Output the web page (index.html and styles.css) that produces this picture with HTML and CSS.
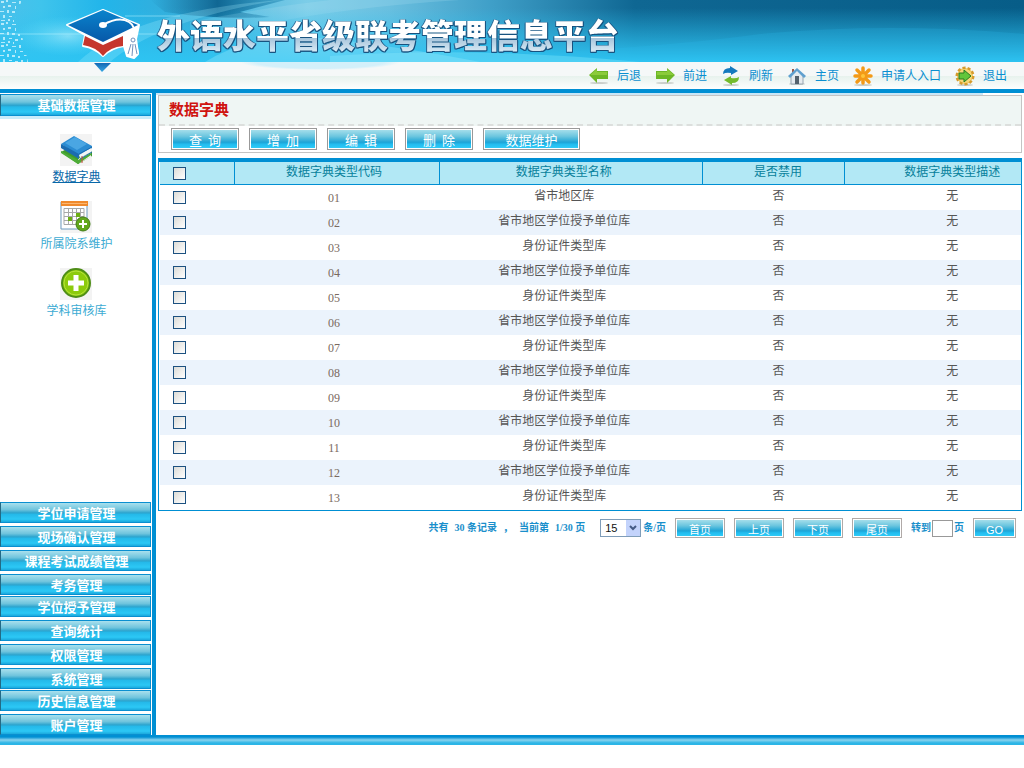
FILE: index.html
```html
<!DOCTYPE html>
<html lang="zh-CN">
<head>
<meta charset="utf-8">
<title>外语水平省级联考管理信息平台</title>
<link rel="stylesheet" href="styles.css">
</head>
<body>
<header class="header">
  <div class="banner">
    <svg class="banner-art" viewBox="0 0 1024 62" preserveAspectRatio="none" aria-hidden="true">
      <defs>
        <linearGradient id="base" x1="0" x2="1" y1="0" y2="0">
          <stop offset="0" stop-color="#4cc0ea"/><stop offset=".04" stop-color="#3fc4ec"/><stop offset=".1" stop-color="#22b5ea"/>
          <stop offset=".19" stop-color="#3aabd6"/><stop offset=".3" stop-color="#7ccde8"/><stop offset=".38" stop-color="#6abfdf"/>
          <stop offset=".48" stop-color="#3f9fc8"/><stop offset=".62" stop-color="#0f6793"/><stop offset="1" stop-color="#075d88"/>
        </linearGradient>
        <linearGradient id="low" x1="0" x2="0" y1="0" y2="1">
          <stop offset="0" stop-color="#2ec4f2" stop-opacity="0"/><stop offset="1" stop-color="#2ec4f2"/>
        </linearGradient>
        <linearGradient id="shade" x1="0" x2="1" y1="0" y2="0">
          <stop offset="0" stop-color="#0b6796" stop-opacity="0"/><stop offset=".5" stop-color="#0a5f8c" stop-opacity=".9"/><stop offset="1" stop-color="#1580ae" stop-opacity=".4"/>
        </linearGradient>
        <radialGradient id="glow"><stop offset="0" stop-color="#d8fbff" stop-opacity=".95"/><stop offset="1" stop-color="#6be3ff" stop-opacity="0"/></radialGradient>
        <pattern id="bits" width="24" height="22" patternUnits="userSpaceOnUse">
          <path fill="#c9f1fc" d="M1 1h3v2H1zM6 0h2v2H6zM12 2h4v1h-4zM19 1h2v3h-2zM3 6h2v2H3zM8 5h3v2H8zM15 6h1v3h-1zM20 7h3v1h-3zM0 11h4v1H0zM7 10h2v3H7zM12 11h3v2h-3zM18 12h2v2h-2zM3 15h2v3H3zM9 16h3v1H9zM15 17h3v2h-3zM21 16h2v2h-2zM1 20h4v1H1zM8 19h2v2H8zM13 20h1v2h-1z"/>
        </pattern>
      </defs>
      <rect width="1024" height="62" fill="url(#base)"/>
      <path d="M150 0H285L240 12L270 17Q215 20 165 12Z" fill="url(#shade)"/>
      <path d="M190 22Q260 8 330 0H460Q300 10 190 42Z" fill="#b7e8f6" opacity=".2"/>
      <rect y="8" width="1024" height="54" fill="url(#low)"/>
      <path d="M310 44Q430 60 560 52T760 34Q890 22 1024 34V62H310Z" fill="#2cc0f0" opacity=".2"/>
      <path d="M330 56Q470 46 640 62H330Z" fill="#7be3fa" opacity=".4"/>
      <path d="M78 62Q130 12 280 0Q160 20 110 62Z" fill="#a8f1ff" opacity=".25"/>
      <path d="M205 62Q255 30 340 40Q420 50 480 62Z" fill="#9ce9fb" opacity=".35"/>
      <ellipse cx="68" cy="36" rx="55" ry="20" fill="url(#glow)" opacity=".5"/>
      <path d="M0 34H160M125 16H180" stroke="#b9f4ff" stroke-width="1" opacity=".5"/>
      <path d="M0 0H22L14 20L22 36L28 62H0Z" fill="url(#bits)" opacity=".85"/>
    </svg>
    <svg class="logo" viewBox="0 0 76 66" role="img" aria-label="学位帽标志">
      <defs>
        <linearGradient id="cap" x1="0" x2="0" y1="0" y2="1"><stop offset="0" stop-color="#0a83cc"/><stop offset="1" stop-color="#0758a8"/></linearGradient>
        <linearGradient id="tip" x1="0" x2="0" y1="0" y2="1"><stop offset="0" stop-color="#1368b4"/><stop offset="1" stop-color="#36a7e3"/></linearGradient>
      </defs>
      <path d="M38 2L2 17L20 27L18 38Q30 40 38 48Q46 40 59 38L62 48L69 50L73 46L71 31L74 17Z" fill="#fff" stroke="#fff" stroke-width="2" stroke-linejoin="round"/>
      <path d="M20 28L38 37L58 28V38Q45 39 38 48Q31 39 18 37Z" fill="#c6362c"/>
      <path d="M38 2L3 17L38 34L73 17Z" fill="url(#cap)"/>
      <path d="M38 17Q54 8 64 14Q71 18 70 31" fill="none" stroke="#fff" stroke-width="2"/>
      <ellipse cx="38" cy="17" rx="4" ry="3" fill="#fff"/>
      <path d="M69 31Q60 39 63 47L69 50L74 45L71 31" fill="#fff"/>
      <circle cx="68" cy="32" r="2" fill="#fff" stroke="#7191bc"/>
      <path d="M66 36L63 46M68 36L67 48M70 36L72 46" stroke="#7191bc" stroke-width="1"/>
      <path d="M29 55H46L37 64Z" fill="url(#tip)"/>
    </svg>
    <h1 class="site-title">外语水平省级联考管理信息平台</h1>
  </div>
  <nav class="topnav">
    <a href="#"><svg viewBox="0 0 20 20"><ellipse cx="10" cy="17" rx="9" ry="1" fill="#c9ceca"/><path d="M0 9L8 2V5H19V13H8V17Z" fill="#6cb726"/><path d="M1 9L8 3V6H18V9Z" fill="#8bcb3b"/></svg>后退</a>
    <a href="#"><svg viewBox="0 0 20 20"><ellipse cx="10" cy="17" rx="9" ry="1" fill="#c9ceca"/><path d="M20 9L12 2V5H1V13H12V17Z" fill="#6cb726"/><path d="M19 9L12 3V6H2V9Z" fill="#8bcb3b"/></svg>前进</a>
    <a href="#"><svg viewBox="0 0 20 20"><ellipse cx="10" cy="19" rx="8" ry="1" fill="#c9ceca"/><path d="M2 8Q2 2 9 2V0L17 5L10 9V7Q5 6 2 8Z" fill="#1479bd"/><path d="M18 11Q18 17 11 17V19L3 14L10 10V12Q15 13 18 11Z" fill="#73bb2c"/></svg>刷新</a>
    <a href="#"><svg viewBox="0 0 20 20"><ellipse cx="10" cy="18" rx="8" ry="1" fill="#c9ceca"/><path d="M4 9L10 4L16 9V18H4Z" fill="#e5ebef" stroke="#96a5b0"/><path d="M5 3H7V8H5Z" fill="#9a5a4a"/><path d="M1 10L10 2L19 10L17 12L10 5L3 12Z" fill="#5fa0cf"/><path d="M8 10h4v8H8z" fill="#54626d"/></svg>主页</a>
    <a href="#"><svg viewBox="0 0 20 20"><ellipse cx="10" cy="19" rx="9" ry="1" fill="#c9ceca"/><g stroke="#f39a18" stroke-width="3.5" stroke-linecap="round"><path d="M10 2V17M2 10H18M4 4L16 16M16 4L4 16"/></g><circle cx="10" cy="10" r="2" fill="#ffc43a"/></svg>申请人入口</a>
    <a href="#"><svg viewBox="0 0 20 20"><ellipse cx="10" cy="19" rx="8" ry="1" fill="#c9ceca"/><circle cx="10" cy="10" r="8" fill="#f1c95c" stroke="#d69b2c" stroke-width="3" stroke-dasharray="3 2"/><circle cx="10" cy="10" r="7" fill="#f6d878"/><path d="M4 7H9V4L16 10L9 16V13H4Z" fill="#62c63b" stroke="#287a20"/></svg>退出</a>
  </nav>
</header>

<div class="workspace">
  <aside class="sidebar">
    <button class="side-tab" type="button">基础数据管理</button>
    <nav class="side-menu">
      <a class="side-link current" href="#">
        <svg viewBox="0 0 32 32"><path fill="#f3f3f3" d="M0 0h32v32H0z"/><path d="M1 18L18 30L32 22V18L16 10Z" fill="#3f9a2f"/><path d="M18 25L31 18V23L19 29Z" fill="#f3f3ee"/><path d="M1 17L18 26L31 19V21L18 30L1 19Z" fill="#4dac36"/><path d="M1 10L14 2L32 12V14L19 22Z" fill="#2b8cd2"/><path d="M19 21L31 14V18L20 24Z" fill="#f2f5f7"/><path d="M1 10L19 20V25L1 14Z" fill="#1b6cb0"/><path d="M5 9L15 3L27 10L17 16Z" fill="#4aa6e3"/><path d="M19 20L32 13M20 25L32 18" stroke="#1b6cb0"/><path d="M22 22V29" stroke="#c9493c"/></svg>
        数据字典</a>
      <a class="side-link" href="#">
        <svg viewBox="0 0 32 32"><path fill="#f3f3f3" d="M0 0h32v32H0z"/><path d="M1 1H27V28H1Z" fill="#fff" stroke="#6f9cc0"/><path d="M1 0H28V5H1Z" fill="#f08a2c"/><path d="M2 2H27V3H2Z" fill="#fbb771"/><path d="M4 7.500H24V23.500H4ZM8.500 8V24M12.500 8V24M16.500 8V24M20.500 8V24M4 11.500H24M4 15.500H24M4 19.500H24" fill="none" stroke="#a7a9a9"/><path d="M8 16h4v4H8zM16 12h4v4h-4z" fill="#6daf14"/><circle cx="23" cy="23" r="7" fill="#61a71c" stroke="#437d17"/><path d="M23 19V27M19 23H27" stroke="#fff" stroke-width="2"/></svg>
        所属院系维护</a>
      <a class="side-link" href="#">
        <svg viewBox="0 0 32 32"><path fill="#f3f3f3" d="M0 0h32v32H0z"/><circle cx="16" cy="15" r="14" fill="#8ccb0c" stroke="#4e8d17" stroke-width="2"/><circle cx="16" cy="15" r="12" fill="none" stroke="#b5e13d"/><path d="M16 7V23M8 15H24" stroke="#fff" stroke-width="5"/></svg>
        学科审核库</a>
    </nav>
    <div class="side-tabs">
      <button class="side-tab" type="button">学位申请管理</button>
      <button class="side-tab" type="button">现场确认管理</button>
      <button class="side-tab" type="button">课程考试成绩管理</button>
      <button class="side-tab tight" type="button">考务管理</button>
      <button class="side-tab" type="button">学位授予管理</button>
      <button class="side-tab" type="button">查询统计</button>
      <button class="side-tab" type="button">权限管理</button>
      <button class="side-tab tight" type="button">系统管理</button>
      <button class="side-tab" type="button">历史信息管理</button>
      <button class="side-tab" type="button">账户管理</button>
    </div>
  </aside>

  <main class="main">
    <section class="panel">
      <h2 class="panel-title">数据字典</h2>
      <div class="toolbar">
        <button class="btn" type="button">查&nbsp; 询</button>
        <button class="btn" type="button">增&nbsp; 加</button>
        <button class="btn" type="button">编&nbsp; 辑</button>
        <button class="btn" type="button">删&nbsp; 除</button>
        <button class="btn wide" type="button">数据维护</button>
      </div>
    </section>

    <div class="grid">
      <table>
        <colgroup><col class="c-check"><col class="c-code"><col class="c-name"><col class="c-off"><col></colgroup>
        <thead>
          <tr><th><input type="checkbox" aria-label="全选"></th><th>数据字典类型代码</th><th>数据字典类型名称</th><th>是否禁用</th><th>数据字典类型描述</th></tr>
        </thead>
        <tbody>
          <tr><td><input type="checkbox" aria-label="选择 01"></td><td>01</td><td>省市地区库</td><td>否</td><td>无</td></tr>
          <tr><td><input type="checkbox" aria-label="选择 02"></td><td>02</td><td>省市地区学位授予单位库</td><td>否</td><td>无</td></tr>
          <tr><td><input type="checkbox" aria-label="选择 03"></td><td>03</td><td>身份证件类型库</td><td>否</td><td>无</td></tr>
          <tr><td><input type="checkbox" aria-label="选择 04"></td><td>04</td><td>省市地区学位授予单位库</td><td>否</td><td>无</td></tr>
          <tr><td><input type="checkbox" aria-label="选择 05"></td><td>05</td><td>身份证件类型库</td><td>否</td><td>无</td></tr>
          <tr><td><input type="checkbox" aria-label="选择 06"></td><td>06</td><td>省市地区学位授予单位库</td><td>否</td><td>无</td></tr>
          <tr><td><input type="checkbox" aria-label="选择 07"></td><td>07</td><td>身份证件类型库</td><td>否</td><td>无</td></tr>
          <tr><td><input type="checkbox" aria-label="选择 08"></td><td>08</td><td>省市地区学位授予单位库</td><td>否</td><td>无</td></tr>
          <tr><td><input type="checkbox" aria-label="选择 09"></td><td>09</td><td>身份证件类型库</td><td>否</td><td>无</td></tr>
          <tr><td><input type="checkbox" aria-label="选择 10"></td><td>10</td><td>省市地区学位授予单位库</td><td>否</td><td>无</td></tr>
          <tr><td><input type="checkbox" aria-label="选择 11"></td><td>11</td><td>身份证件类型库</td><td>否</td><td>无</td></tr>
          <tr><td><input type="checkbox" aria-label="选择 12"></td><td>12</td><td>省市地区学位授予单位库</td><td>否</td><td>无</td></tr>
          <tr><td><input type="checkbox" aria-label="选择 13"></td><td>13</td><td>身份证件类型库</td><td>否</td><td>无</td></tr>
        </tbody>
      </table>
    </div>

    <div class="pager">
      <div class="summary"><span>共有</span><span>30 条记录</span><span>，</span><span>当前第</span><span>1/30 页</span></div>
      <label class="size"><select><option>15</option><option>30</option></select><span>条/页</span></label>
      <button class="btn small" type="button">首页</button>
      <button class="btn small" type="button">上页</button>
      <button class="btn small" type="button">下页</button>
      <button class="btn small" type="button">尾页</button>
      <label class="jump">转到<input type="text"><span>页</span></label>
      <button class="btn small go" type="button">GO</button>
    </div>
  </main>
</div>
<footer class="footer"></footer>
</body>
</html>
```
FILE: styles.css
```css
* { box-sizing: border-box; }

body {
  display: flex;
  flex-direction: column;
  min-height: 100vh;
  margin: 0;
  padding-bottom: 23px;
  background: #fff;
  color: #555;
  font: 12px/16px "Liberation Serif", "Noto Sans CJK SC", sans-serif;
}

a { color: inherit; text-decoration: none; }
button, input, select { margin: 0; font: inherit; }
button { cursor: pointer; }

/* Header */
.header { border-bottom: 4px solid #008fd3; }

.banner {
  position: relative;
  display: flex;
  height: 62px;
  padding-left: 65px;
  gap: 16px;
}

.banner-art {
  position: absolute;
  inset: 0;
  width: 100%;
  height: 100%;
}

.logo {
  position: relative;
  z-index: 1;
  flex: none;
  width: 76px;
  height: 66px;
  margin-top: 8px;
}

.site-title {
  position: relative;
  margin: 13px 0 0;
  font: 900 33px/42px "Noto Sans CJK SC", sans-serif;
  white-space: nowrap;
  color: transparent;
  background: linear-gradient(#fff 50%, #a9c6dc 52%, #e2f1fa 85%);
  background-clip: text;
  -webkit-background-clip: text;
  filter: drop-shadow(1px 0 0 #17527f) drop-shadow(-1px 0 0 #2f6d98) drop-shadow(0 1px 0 #17527f);
}

.topnav {
  display: flex;
  flex-wrap: wrap;
  justify-content: flex-end;
  align-items: center;
  gap: 0 14px;
  min-height: 27px;
  padding-right: 17px;
  background:
    radial-gradient(closest-side, #d3f0fa 80%, transparent) 240px -8px / 160px 16px no-repeat,
    linear-gradient(#f5f8f8 50%, #e7f2ed 52%, #fdfefe);
  color: #0a8fd0;
}

.topnav a { display: flex; align-items: center; gap: 8px; }
.topnav svg { width: 20px; height: 20px; }

/* Sidebar */
.workspace { display: flex; flex: 1; }

.sidebar {
  display: flex;
  flex-direction: column;
  flex: none;
  width: 156px;
  padding: 1px 1px 0 0;
  border-right: 4px solid #008fd3;
}

.side-tab {
  flex: none;
  width: 151px;
  height: 21px;
  padding: 0 0 0 2px;
  border: 1px solid #0a8fd0;
  border-left-color: #236a85;
  background: linear-gradient(#a9e0ed, #6fc4dd 35%, #2ba4ce 52%, #25b9e9 60%, #2cc8f5 85%, #1ba8dc);
  color: #fff;
  font: bold 13px/18px "Noto Sans CJK SC", sans-serif;
}

.sidebar > .side-tab { height: 22px; box-shadow: 0 3px #c9ecfa; }

.side-menu {
  display: flex;
  flex-direction: column;
  align-items: center;
  gap: 16px;
  padding: 18px 0 18px 2px;
}

.side-link {
  display: flex;
  flex-direction: column;
  align-items: center;
  gap: 3px;
  color: #3cabd3;
}

.side-link svg { width: 32px; height: 32px; }
.side-link.current { color: #0767a8; text-decoration: underline; }

.side-tabs {
  display: flex;
  flex-direction: column;
  gap: 1px;
  margin-top: auto;
}

.side-tabs .side-tab { margin-bottom: 2px; }
.side-tabs .tight, .side-tabs .side-tab:last-child { margin-bottom: 0; }

/* Content */
.main {
  flex: 1;
  min-width: 0;
  padding: 0 2px;
  background: linear-gradient(#c9e6f6, #c9e6f6) 0 0 / calc(100% - 41px) 2px no-repeat;
}

.panel {
  margin-top: 2px;
  border: 1px solid #c4c4c4;
  background: #fff;
}

.panel-title {
  margin: 0;
  padding: 2px 10px 4px;
  border-bottom: 2px dashed #dcdfdd;
  background: #eff6f4;
  color: #cf1410;
  font: bold 15px/22px "Noto Sans CJK SC", sans-serif;
}

.toolbar {
  display: flex;
  flex-wrap: wrap;
  gap: 10px;
  padding: 2px 12px;
}

.btn {
  width: 68px;
  height: 22px;
  padding: 1px;
  border: 1px solid #999;
  background: linear-gradient(#a4deeb, #6cc6df 35%, #1da4d6 68%, #22bdf0 80%, #2fcaf6) content-box;
  box-shadow: inset 0 0 0 1px #fff;
  color: #fff;
  font: 13px/20px "Noto Sans CJK SC", sans-serif;
}

.wide { width: 97px; }

/* Table */
.grid {
  margin-top: 5px;
  padding-left: 1px;
  border: 1px solid #008fd3;
  border-top-width: 4px;
}

table {
  width: 100%;
  border-collapse: separate;
  border-spacing: 0;
  table-layout: fixed;
}

.c-check { width: 75px; }
.c-code { width: 23.8%; }
.c-name { width: 30.5%; }
.c-off { width: 16.6%; }

th, td {
  height: 25px;
  padding: 0 0 3px;
  text-align: center;
  font-weight: normal;
  line-height: 16px;
}

th {
  height: 23px;
  border-right: 1px solid #008fd3;
  border-bottom: 1px solid #008fd3;
  background: #b2e8f5;
  color: #067f9b;
}

th:last-child { border-right: 0; }
tbody tr:nth-child(even) { background: #ebf3fc; }
th:nth-child(2) { padding-right: 6px; }
td:nth-child(2) { padding: 0 7px 0 0; color: #7a6a60; }
th:nth-child(3), td:nth-child(3) { padding-right: 14px; }
th:nth-child(4), td:nth-child(4) { padding-left: 9px; }
th:first-child, td:first-child { padding: 0 0 0 13px; text-align: left; }
th:last-child, td:last-child { padding-left: 38px; }

input[type="checkbox"] {
  display: block;
  width: 13px;
  height: 13px;
  border: 1px solid #1c5180;
  background: linear-gradient(135deg, #dcdcd7, #fff);
  appearance: none;
}

input[type="checkbox"]:checked { background: #1c5180; }

/* Pager */
.pager {
  display: flex;
  flex-wrap: wrap;
  justify-content: flex-end;
  align-items: center;
  gap: 4px 9px;
  margin-top: 7px;
  padding-right: 6px;
  color: #1a8fcb;
  font: bold 10px/20px "Liberation Serif", "Noto Sans CJK SC", sans-serif;
}

.summary { display: flex; gap: 6px; margin-right: 6px; }
.size, .jump { display: flex; align-items: center; }
.size { gap: 2px; }
.jump { gap: 1px; }

.size select {
  width: 41px;
  height: 18px;
  padding: 0 0 0 4px;
  border: 1px solid #7f9db9;
  border-radius: 0;
  background:
    url("data:image/svg+xml,%3Csvg xmlns='http://www.w3.org/2000/svg' viewBox='0 0 14 16'%3E%3Cpath fill='%23c3d3fb' d='M0 0h14v16H0z'/%3E%3Cpath d='M4 6l3 3 3-3' fill='none' stroke='%23445a85' stroke-width='2'/%3E%3C/svg%3E") right center / 14px 16px no-repeat,
    #fff;
  appearance: none;
  color: #111;
  font: 11px/16px "Liberation Sans", sans-serif;
}

.jump input {
  width: 21px;
  height: 17px;
  padding: 0 2px;
  border: 1px solid #999;
}

.small {
  width: 50px;
  height: 20px;
  border-color: #b0aaa8;
  font-size: 11px;
  line-height: 18px;
}

.go { width: 43px; font-family: "Liberation Sans", sans-serif; line-height: 20px; }

.footer {
  height: 10px;
  background: linear-gradient(#008fd3 20%, #8bd3ee 50%, #2cb5e6 80%, #2cb5e6);
}
```
